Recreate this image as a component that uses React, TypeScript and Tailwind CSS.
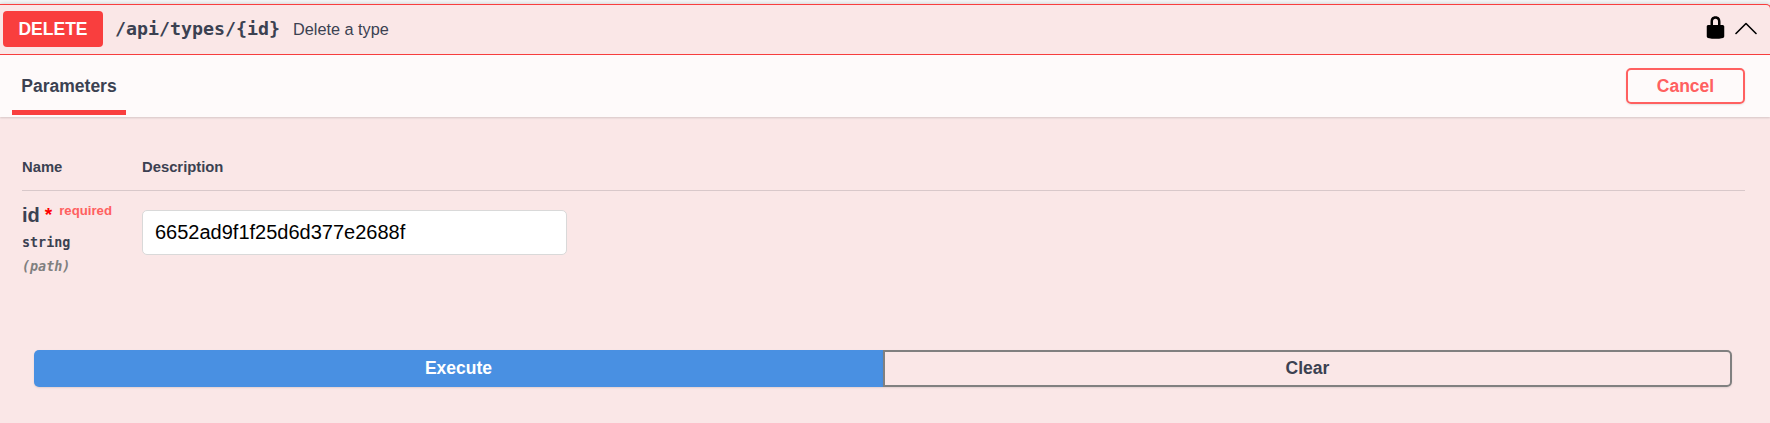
import React from "react";

export default function App() {
  return (
    <div className="h-[423px] w-full overflow-hidden bg-[#f5f5f6] pt-1 font-['Liberation_Sans',Arial,sans-serif] text-[#3b4151]">
      <section className="h-[440px] w-[calc(100%+1px)] rounded-tr-[5px] border-t border-r border-[#f93e3e] bg-[#fae7e7] shadow-[0_0_4px_rgba(0,0,0,0.19)]">
        <header className="flex h-[50px] items-center border-b border-[#f93e3e] pb-[1px] pl-[3px]">
          <span className="flex h-9 w-[100px] items-center justify-center rounded-[4px] bg-[#f93e3e] pt-px text-[17.5px] font-bold text-white">
            DELETE
          </span>
          <span className="ml-3 w-[166px] whitespace-nowrap font-['DejaVu_Sans_Mono',monospace] text-[18.28px] font-bold">
            /api/types/&#123;id&#125;
          </span>
          <span className="ml-3 text-[16.25px]">Delete a type</span>
          <svg className="mr-[7px] mb-[4px] ml-auto h-[25px] w-[25px]" viewBox="0 0 20 20">
            <path d="M15.8 8H14V5.6C14 2.703 12.665 1 10 1 7.334 1 6 2.703 6 5.6V8H4c-.553 0-1 .646-1 1.199V17c0 .549.428 1.139.951 1.307l1.197.387C5.672 18.861 6.55 19 7.1 19h5.8c.549 0 1.428-.139 1.951-.307l1.196-.387c.524-.167.953-.757.953-1.306V9.199C17 8.646 16.352 8 15.8 8zM12 8H8V5.199C8 3.754 8.797 3 10 3c1.203 0 2 .754 2 2.199V8z" />
          </svg>
          <svg className="mb-px mr-[13px] h-[13px] w-[22px]" viewBox="0 0 22 13" fill="none" stroke="black" strokeWidth="1.6" strokeLinecap="round" strokeLinejoin="round">
            <path d="M1 11.5 11 1.5 21 11.5" />
          </svg>
        </header>
        <div className="flex h-[62px] justify-between bg-[#fefafa] pr-[25px] pl-3 shadow-[0_1px_2px_rgba(0,0,0,0.15)]">
          <h4 className="flex h-[60px] w-[114px] items-center justify-center border-b-[5px] border-[#f93e3e] pt-2 text-[17.5px] font-bold">
            Parameters
          </h4>
          <button className="mt-[13px] h-9 w-[119px] rounded-[5px] border-2 border-[#ff6060] text-[17.5px] font-bold text-[#ff6060] shadow-[0_1px_2px_rgba(0,0,0,0.1)]">
            Cancel
          </button>
        </div>
        <div className="pt-[25px] pr-[25px] pl-[22px]">
          <div className="grid h-[49px] grid-cols-[120px_1fr] items-center border-b border-[#d8c8ca] pt-[3px] text-[14.8px] font-bold">
            <span>Name</span>
            <span>Description</span>
          </div>
          <div className="grid h-[159px] grid-cols-[120px_1fr]">
            <div className="pt-3">
              <div className="flex h-6 whitespace-nowrap font-bold">
                <span className="text-[20px] leading-6">id</span>
                <span className="ml-[5px] text-[19px] leading-6 text-[#ff0000]">*</span>
                <span className="ml-[7px] text-[13.2px] leading-4 text-[#ff6060]">required</span>
              </div>
              <div className="mt-1 h-6 font-['DejaVu_Sans_Mono',monospace] text-[13.4px] leading-6 font-bold">string</div>
              <div className="h-6 font-['DejaVu_Sans_Mono',monospace] text-[13.4px] leading-6 font-bold text-[#808080] italic">(path)</div>
            </div>
            <input
              className="mt-[19px] h-[45px] w-[425px] rounded-[5px] border border-[#d9d9d9] bg-white px-3 text-[20px] text-black"
              defaultValue="6652ad9f1f25d6d377e2688f"
            />
          </div>
          <div className="flex h-[37px] pr-[13px] pl-3">
            <button className="h-full w-[849px] rounded-l-[5px] bg-[#4990e2] text-[17.5px] font-bold text-white shadow-[0_1px_2px_rgba(0,0,0,0.1)]">
              Execute
            </button>
            <button className="h-full flex-1 rounded-r-[5px] border-2 border-[#808080] text-[17.5px] font-bold shadow-[0_1px_2px_rgba(0,0,0,0.1)]">
              Clear
            </button>
          </div>
        </div>
      </section>
    </div>
  );
}
